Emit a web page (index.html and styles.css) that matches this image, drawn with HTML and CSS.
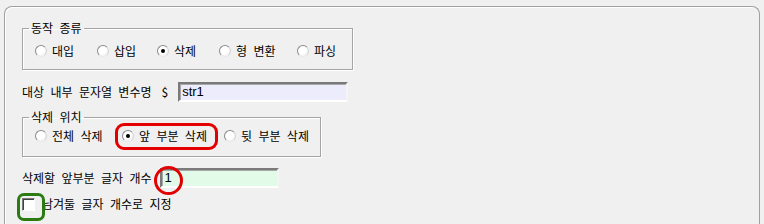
FILE: index.html
```html
<!DOCTYPE html>
<html lang="ko">
<head>
  <meta charset="UTF-8" />
  <title>삭제 설정</title>
  <link rel="stylesheet" href="styles.css">
</head>
<body>

<div class="panel">
  <fieldset class="group group-kind">
    <legend>동작 종류</legend>
    <div class="options">
      <label class="opt"><span class="radio"></span>대입</label>
      <label class="opt"><span class="radio"></span>삽입</label>
      <label class="opt"><span class="radio on"></span>삭제</label>
      <label class="opt"><span class="radio"></span>형 변환</label>
      <label class="opt"><span class="radio"></span>파싱</label>
    </div>
  </fieldset>

  <div class="row row-var">
    <span class="caption">대상 내부 문자열 변수명</span>
    <span class="dollar">$</span>
    <div class="field field-var">str1</div>
  </div>

  <fieldset class="group group-pos">
    <legend>삭제 위치</legend>
    <div class="options">
      <label class="opt"><span class="radio"></span>전체 삭제</label>
      <label class="opt mark-red"><span class="radio on"></span>앞 부분 삭제</label>
      <label class="opt"><span class="radio"></span>뒷 부분 삭제</label>
    </div>
  </fieldset>

  <div class="row row-count">
    <span class="caption">삭제할 앞부분 글자 개수</span>
    <div class="field field-count"><span class="num">1</span></div>
  </div>

  <div class="row row-check">
    <span class="check"></span>
    <span class="caption">남겨둘 글자 개수로 지정</span>
  </div>
</div>

</body>
</html>
```

FILE: styles.css
```css
* {
  margin: 0;
  padding: 0;
  box-sizing: border-box;
}
body {
  background: #f0f0f0;
  font-family: "Noto Sans CJK KR", "Liberation Sans", sans-serif;
  font-size: 12px;
  line-height: 14px;
  color: #000;
  word-spacing: 3px;
  overflow: hidden;
}

.panel {
  margin: 6px 0 0 4px;
  width: 756px;
  height: 218px;
  border: 1px solid #a0a0a0;
  border-bottom: none;
  border-radius: 8px 8px 0 0;
  box-shadow: inset 1px 1px 0 #fff;
  padding: 14px 0 0 17px;
}

.group {
  border: 1px solid #a5a5a5;
  box-shadow: 1px 1px 0 #fff, inset 1px 1px 0 #fff;
  padding: 0 0 0 12px;
}
.group legend {
  margin-left: -6px;
  padding: 0 2px;
}
.group-kind {
  width: 331px;
  padding-bottom: 11px;
}
.group-pos {
  width: 299px;
  margin-top: 8px;
  padding-bottom: 13px;
}
.group-kind .options {
  margin-top: 9px;
}
.group-pos .options {
  margin-top: 5px;
}

/* fixed control widths, like the dialog layout */
.group-kind .opt:nth-child(1) { width: 62px; }
.group-kind .opt:nth-child(2) { width: 60px; }
.group-kind .opt:nth-child(3) { width: 62px; }
.group-kind .opt:nth-child(4) { width: 78px; }
.group-pos .opt:nth-child(1) { width: 87px; }
.group-pos .opt:nth-child(2) { width: 102px; }

.options {
  display: flex;
  height: 14px;
  align-items: center;
}
.opt {
  display: flex;
  align-items: center;
  gap: 5px;
  white-space: nowrap;
  position: relative;
  flex: none;
}

.radio {
  width: 12px;
  height: 12px;
  border-radius: 50%;
  border: 1px solid #8f8f8f;
  border-color: #8a8a8a #d4d4d4 #e8e8e8 #8a8a8a;
  background: radial-gradient(circle at 40% 40%, #fff 45%, #e6e6e6 100%);
  position: relative;
  flex: none;
}
.radio.on::after {
  content: "";
  position: absolute;
  left: 3px;
  top: 3px;
  width: 4px;
  height: 4px;
  border-radius: 50%;
  background: #000;
}

.mark-red::after {
  content: "";
  position: absolute;
  left: -7px;
  width: 97px;
  top: -6px;
  bottom: -7px;
  border: 3px solid #e20000;
  border-radius: 9px;
}

.row {
  display: flex;
  align-items: center;
}
.row-var {
  margin-top: 12px;
  height: 20px;
}
.dollar {
  margin-left: 10px;
}
.field {
  height: 20px;
  border: 2px solid;
  border-color: #7a7a7a #f4f4f4 #fff #7a7a7a;
  box-shadow: inset 1px 1px 0 #a8a8a8;
  font-family: "Liberation Sans", sans-serif;
  font-size: 13px;
  line-height: 16px;
  padding-left: 2px;
}
.field-var {
  width: 170px;
  margin-left: 10px;
  background: #ececfc;
}
.row-count {
  margin-top: 11px;
  height: 20px;
}
.field-count {
  width: 119px;
  margin-left: 9px;
  background: #e2fbe9;
  position: relative;
}
.num {
  position: relative;
}
.field-count::after {
  content: "";
  position: absolute;
  left: -8px;
  top: -4px;
  width: 23px;
  height: 23px;
  border: 3px solid #e20000;
  border-radius: 50%;
}

.row-check {
  margin-top: 9px;
  height: 14px;
  gap: 7px;
}
.check {
  width: 13px;
  height: 13px;
  border: 1px solid;
  border-color: #7a7a7a #fff #fff #7a7a7a;
  box-shadow: inset 1px 1px 0 #404040;
  background: #fff;
  position: relative;
  flex: none;
}
.check::after {
  content: "";
  position: absolute;
  left: -6px;
  top: -6px;
  width: 22px;
  height: 22px;
  border: 3px solid #2c7a12;
  border-radius: 7px;
}
```
